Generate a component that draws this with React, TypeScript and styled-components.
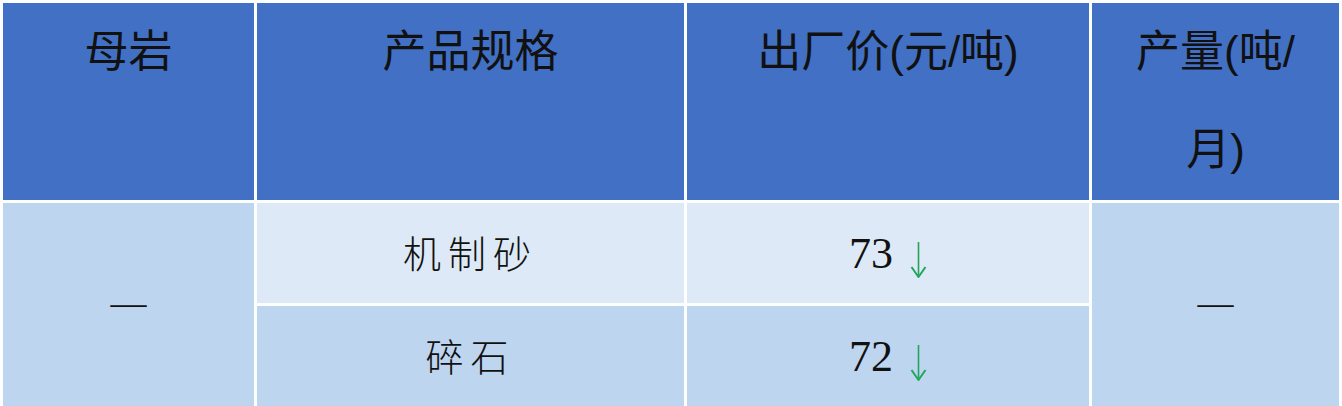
import React from 'react';
import styled, { createGlobalStyle } from 'styled-components';

const GlobalStyle = createGlobalStyle`
  html, body {
    margin: 0;
    padding: 0;
    background: #ffffff;
    overflow: hidden;
  }
`;

const colors = {
  header: '#4170c5',
  light: '#dde9f6',
  mid: '#bdd5ef',
  gap: '#fdfeff',
  text: '#111111',
  down: '#22a55b',
};

const PriceTable = styled.table`
  table-layout: fixed;
  border-collapse: separate;
  border-spacing: 3px;
  background: ${colors.gap};
  width: 1342px;
`;

const HeadCell = styled.th<{ $w: number }>`
  width: ${(p) => p.$w}px;
  height: 197px;
  padding: 0;
  background: ${colors.header};
  color: ${colors.text};
  font-family: 'Liberation Sans', 'Noto Sans CJK SC', sans-serif;
  font-size: 44px;
  font-weight: 400;
  line-height: 98px;
  text-align: center;
  vertical-align: top;
`;

const BodyCell = styled.td<{ $tone: 'light' | 'mid' }>`
  height: 100px;
  padding: 0;
  background: ${(p) => (p.$tone === 'light' ? colors.light : colors.mid)};
  color: ${colors.text};
  text-align: center;
  vertical-align: middle;
`;

const SpecText = styled.span`
  font-family: 'Noto Sans CJK SC', sans-serif;
  font-size: 38px;
  font-weight: 300;
  letter-spacing: 7px;
  position: relative;
  top: -2px;
`;

const Dash = styled.span`
  font-family: 'Liberation Serif', serif;
  font-size: 36px;
  position: relative;
  top: -2px;
`;

const Price = styled.span`
  display: inline-flex;
  align-items: flex-start;
  gap: 17px;
  font-family: 'Liberation Serif', serif;
  font-size: 44px;
  line-height: 1;
  position: relative;
  top: 1px;
`;

const Arrow = styled.svg`
  width: 17px;
  height: 37px;
  margin-top: 9px;
  margin-bottom: -10px;
`;

const DownArrow = () => (
  <Arrow viewBox="0 0 17 37">
    <path d="M8.5 1 V34" stroke={colors.down} strokeWidth="1.6" fill="none" />
    <path d="M1.5 26 L8.5 36 L15.5 26" stroke={colors.down} strokeWidth="2" fill="none" strokeLinejoin="round" />
  </Arrow>
);

const rows = [
  { spec: '机制砂', price: 73, tone: 'light' as const },
  { spec: '碎石', price: 72, tone: 'mid' as const },
];

export default function App() {
  return (
    <>
      <GlobalStyle />
      <PriceTable>
        <thead>
          <tr>
            <HeadCell $w={251}>母岩</HeadCell>
            <HeadCell $w={427}>产品规格</HeadCell>
            <HeadCell $w={402}>出厂价(元/吨)</HeadCell>
            <HeadCell $w={247}>
              产量(吨/
              <br />
              月)
            </HeadCell>
          </tr>
        </thead>
        <tbody>
          {rows.map((row, i) => (
            <tr key={row.spec}>
              {i === 0 && (
                <BodyCell $tone="mid" rowSpan={2}>
                  <Dash>—</Dash>
                </BodyCell>
              )}
              <BodyCell $tone={row.tone}>
                <SpecText>{row.spec}</SpecText>
              </BodyCell>
              <BodyCell $tone={row.tone}>
                <Price>
                  {row.price}
                  <DownArrow />
                </Price>
              </BodyCell>
              {i === 0 && (
                <BodyCell $tone="mid" rowSpan={2}>
                  <Dash>—</Dash>
                </BodyCell>
              )}
            </tr>
          ))}
        </tbody>
      </PriceTable>
    </>
  );
}
